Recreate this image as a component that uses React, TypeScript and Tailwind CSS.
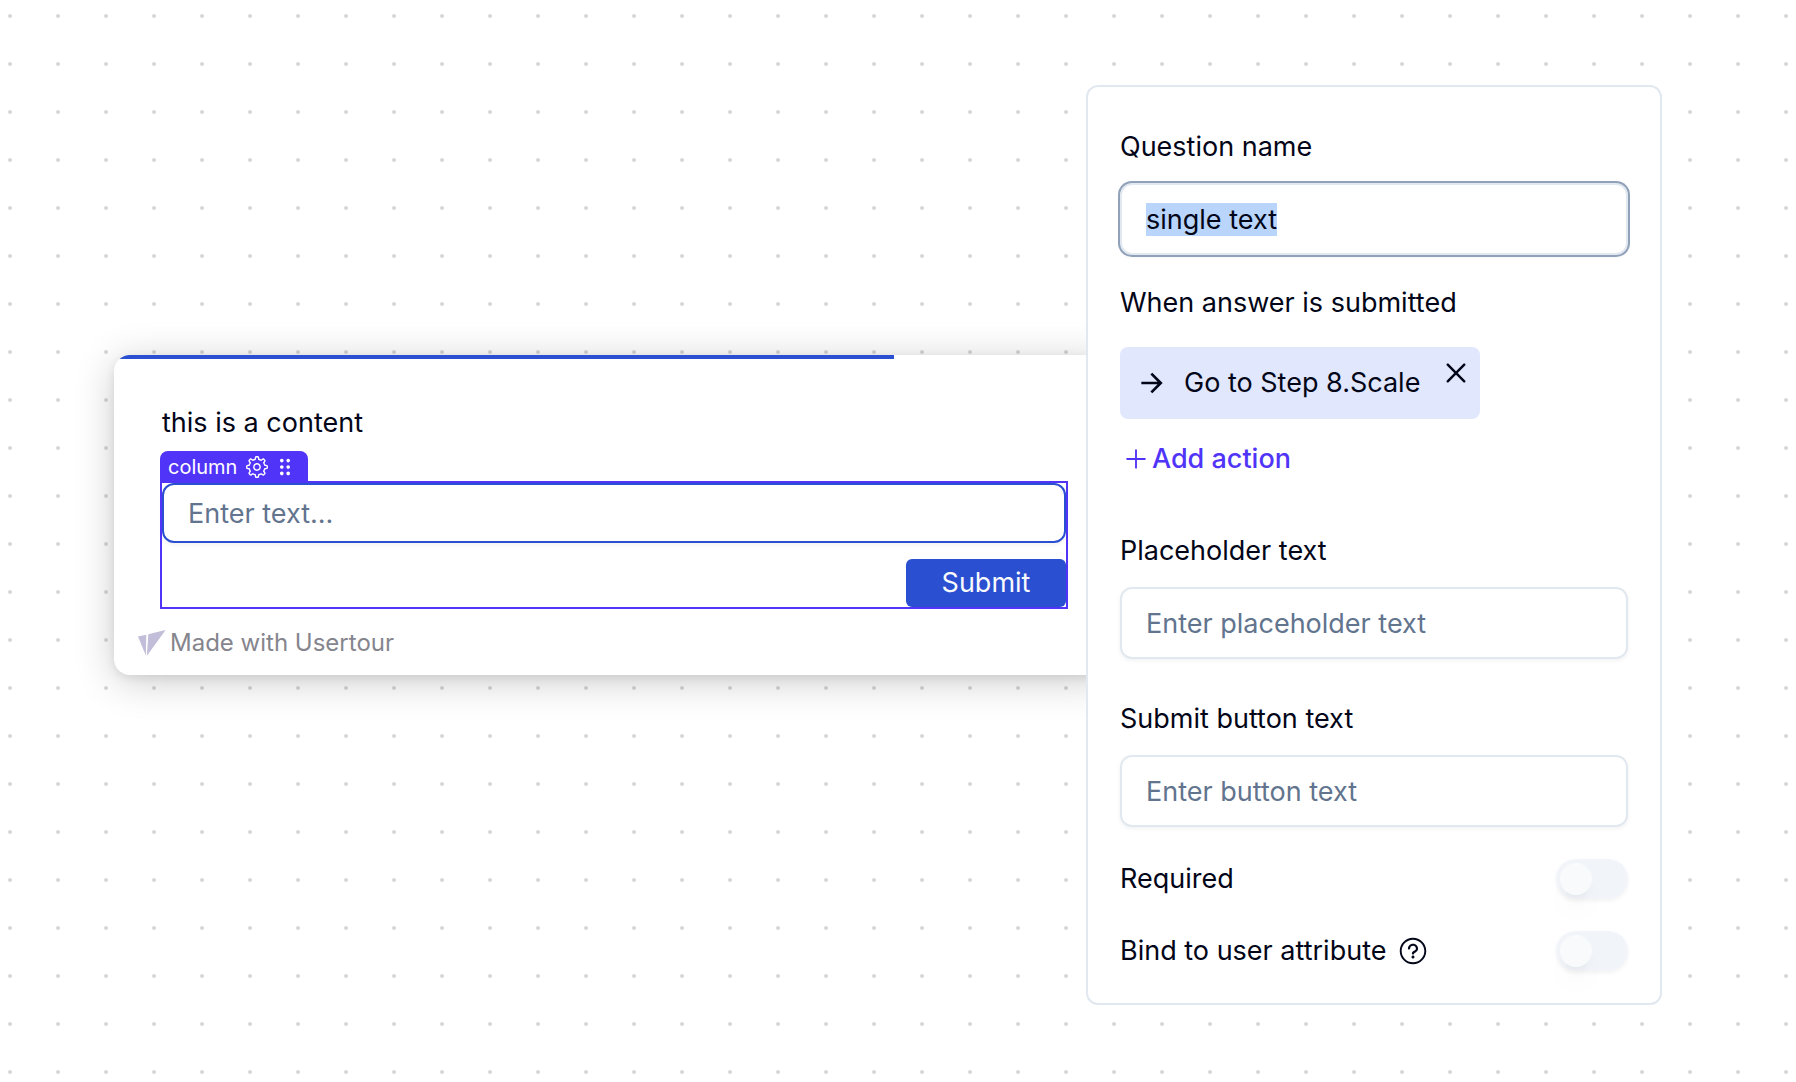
import { useEffect, useRef, useState } from "react";
import {
  RxCross2,
  RxDragHandleDots2,
  RxGear,
  RxPlus,
  RxQuestionMarkCircled,
} from "react-icons/rx";
import { RiArrowRightLine } from "react-icons/ri";

const inputClass =
  "h-[72px] w-full rounded-xl border-2 border-slate-200 bg-white px-6 text-[27px] text-slate-950 shadow-[0_2px_4px_rgba(0,0,0,0.05)] outline-none placeholder:text-slate-500 selection:bg-[#b9d5fb] focus:ring-2 focus:ring-slate-400";

function UsertourLogo() {
  return (
    <svg viewBox="0 0 28 26" className="h-[26px] w-7" aria-hidden="true">
      <path d="M0 6.5 8.3 4.7 7.8 25.5Z" fill="#c2bdd8" />
      <path d="M10.3 4.3 27.6 0 8.9 25.8Z" fill="#c2bdd8" />
    </svg>
  );
}

function Preview() {
  return (
    <section className="mt-[270px] min-w-0 flex-1 self-start overflow-hidden rounded-2xl bg-white shadow-[0_6px_40px_rgba(0,0,0,0.2),0_3px_10px_rgba(0,0,0,0.08)]">
      <div className="h-1 w-[78%] bg-[#2a4fd0]" />
      <div className="px-12 pt-11">
        <p className="text-[27px] leading-10">this is a content</p>

        <div className="relative mt-10 outline-2 outline-[#5034f7]">
          <div className="absolute bottom-full -left-0.5 flex h-8 w-[148px] items-center rounded-t-lg bg-[#5034f7] pl-2 text-xl text-white">
            column
            <button type="button" aria-label="Column settings" className="ml-2">
              <RxGear size={24} />
            </button>
            <RxDragHandleDots2 size={24} className="ml-1" />
          </div>
          <input
            type="text"
            aria-label="Answer"
            placeholder="Enter text..."
            className="block h-[60px] w-full rounded-xl border-2 border-[#2a4fd0] bg-white px-6 text-[27px] shadow-[0_2px_4px_rgba(0,0,0,0.05)] outline-none placeholder:text-slate-500"
          />
          <div className="mt-4 flex justify-end">
            <button
              type="button"
              className="h-12 w-40 rounded-md bg-[#2a4fd0] text-[27px] text-slate-50"
            >
              Submit
            </button>
          </div>
        </div>
      </div>

      <div className="flex items-center gap-1 px-6 pt-5 pb-4 text-2xl leading-8 text-[#85858d]">
        <UsertourLogo />
        Made with Usertour
      </div>
    </section>
  );
}

function Toggle({ id }: { id: string }) {
  const [on, setOn] = useState(false);

  return (
    <span className="relative inline-flex h-10 w-[72px] rounded-full shadow-[0_2px_4px_rgba(0,0,0,0.05)]">
      <input
        id={id}
        type="checkbox"
        role="switch"
        checked={on}
        onChange={(e) => setOn(e.target.checked)}
        className="peer h-full w-full cursor-pointer appearance-none rounded-full bg-slate-100 checked:bg-[#5034f7]"
      />
      <span className="pointer-events-none absolute top-1 left-1 size-8 rounded-full bg-slate-50 shadow-[0_20px_30px_-6px_rgba(0,0,0,0.05),0_8px_12px_-8px_rgba(0,0,0,0.1)] transition-transform peer-checked:translate-x-8" />
    </span>
  );
}

function QuestionSettings() {
  const nameRef = useRef<HTMLInputElement>(null);

  useEffect(() => {
    nameRef.current?.focus();
    nameRef.current?.select();
  }, []);

  return (
    <aside className="relative z-10 -ml-7 w-[576px] shrink-0 rounded-xl border-2 border-slate-200 bg-white px-8 pt-10 pb-8 text-[27px] leading-10">
      <div className="flex flex-col gap-4">
        <label htmlFor="name">Question name</label>
        <input id="name" ref={nameRef} type="text" defaultValue="single text" className={inputClass} />
      </div>

      <h2 className="mt-7">When answer is submitted</h2>
      <div className="mt-6 flex h-[72px] w-fit items-center rounded-lg bg-[#e1e7fd] pr-2 pl-4">
        <RiArrowRightLine size={32} />
        <span className="ml-4">Go to Step 8.Scale</span>
        <button type="button" aria-label="Remove action" className="mt-2.5 ml-5 self-start">
          <RxCross2 size={32} />
        </button>
      </div>
      <button type="button" className="mt-5 flex items-center gap-0.5 pl-0.5 font-medium text-[#5034f7]">
        <RxPlus size={28} />
        Add action
      </button>

      <div className="mt-[52px] flex flex-col gap-4">
        <label htmlFor="placeholder">Placeholder text</label>
        <input id="placeholder" type="text" placeholder="Enter placeholder text" className={inputClass} />
      </div>
      <div className="mt-10 flex flex-col gap-4">
        <label htmlFor="submit">Submit button text</label>
        <input id="submit" type="text" placeholder="Enter button text" className={inputClass} />
      </div>

      <div className="mt-8 flex items-center justify-between">
        <label htmlFor="required">Required</label>
        <Toggle id="required" />
      </div>
      <div className="mt-8 flex items-center justify-between">
        <div className="flex items-center gap-3">
          <label htmlFor="bind">Bind to user attribute</label>
          <RxQuestionMarkCircled size={30} />
        </div>
        <Toggle id="bind" />
      </div>
    </aside>
  );
}

export default function App() {
  return (
    <main className="flex min-h-screen items-start bg-white bg-[radial-gradient(circle_at_10px_16px,#d8d8d8_1.5px,transparent_2.3px)] bg-[length:48px_48px] pt-[85px] pr-[134px] pb-[77px] pl-[114px] font-[Inter,'Liberation_Sans',sans-serif] text-slate-950">
      <Preview />
      <QuestionSettings />
    </main>
  );
}
